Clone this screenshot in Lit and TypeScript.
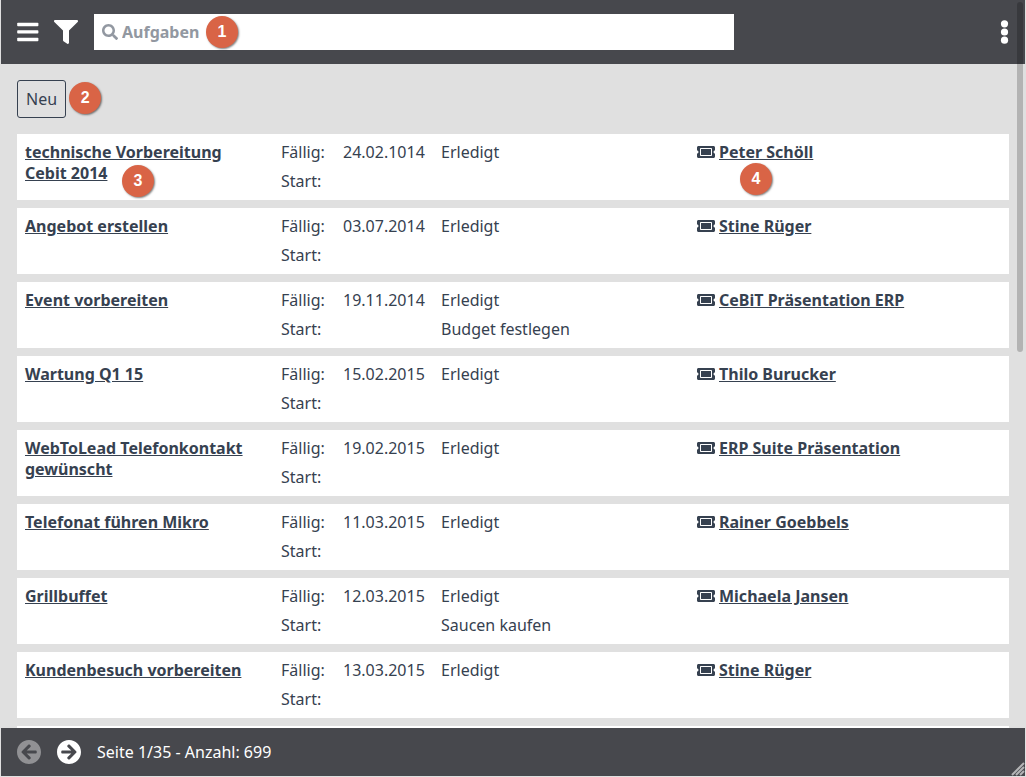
import { LitElement, html, svg, css } from "lit";
import { customElement, state } from "lit/decorators.js";

interface Task {
  title: string;
  due: string;
  status: string;
  note?: string;
  link: string;
  titleMark?: string;
  linkMark?: string;
}

const TASKS: Task[] = [
  { title: "technische Vorbereitung Cebit 2014", due: "24.02.1014", status: "Erledigt", link: "Peter Schöll", titleMark: "3", linkMark: "4" },
  { title: "Angebot erstellen", due: "03.07.2014", status: "Erledigt", link: "Stine Rüger" },
  { title: "Event vorbereiten", due: "19.11.2014", status: "Erledigt", note: "Budget festlegen", link: "CeBiT Präsentation ERP" },
  { title: "Wartung Q1 15", due: "15.02.2015", status: "Erledigt", link: "Thilo Burucker" },
  { title: "WebToLead Telefonkontakt gewünscht", due: "19.02.2015", status: "Erledigt", link: "ERP Suite Präsentation" },
  { title: "Telefonat führen Mikro", due: "11.03.2015", status: "Erledigt", link: "Rainer Goebbels" },
  { title: "Grillbuffet", due: "12.03.2015", status: "Erledigt", note: "Saucen kaufen", link: "Michaela Jansen" },
  { title: "Kundenbesuch vorbereiten", due: "13.03.2015", status: "Erledigt", link: "Stine Rüger" },
];

const arrow = svg`<path d="M256 504C119 504 8 393 8 256S119 8 256 8s248 111 248 248-111 248-248 248zm28.9-143.6L209.4 288H392c13.3 0 24-10.7 24-24v-16c0-13.3-10.7-24-24-24H209.4l75.5-72.4c9.7-9.3 9.9-24.8.4-34.3l-11-10.9c-9.4-9.4-24.6-9.4-33.9 0L107.7 239c-9.4 9.4-9.4 24.6 0 33.9l132.7 132.7c9.4 9.4 24.6 9.4 33.9 0l11-10.9c9.5-9.5 9.3-25-.4-34.3z"/>`;

@customElement("task-card")
export class TaskCard extends LitElement {
  static properties = { task: { attribute: false } };
  declare task: Task;

  static styles = css`
    :host {
      display: grid;
      grid-template-columns: minmax(0, 8fr) minmax(0, 5fr) minmax(0, 8fr) minmax(0, 10fr);
      background: #fff;
      padding: 4px 0;
      line-height: 29px;
    }
    .cell {
      padding: 0 8px;
    }
    .title {
      position: relative;
      padding: 4px 8px 0;
      line-height: 21px;
    }
    .dates {
      display: grid;
      grid-template-columns: 62px 1fr;
      grid-auto-rows: 29px;
      margin: 0;
      white-space: nowrap;
    }
    dd {
      margin: 0;
    }
    a {
      color: inherit;
      font-weight: 700;
    }
    .related {
      position: relative;
      display: flex;
      align-items: center;
      align-self: start;
      gap: 4px;
    }
    .icon {
      width: 18px;
      height: 16px;
      margin-bottom: 2px;
      fill: currentColor;
    }
    .title-mark,
    .link-mark {
      position: absolute;
    }
    .title-mark {
      left: 105px;
      top: 27px;
    }
    .link-mark {
      left: 51px;
      top: 25px;
    }
  `;

  render() {
    const t = this.task;
    return html`
      <div class="title">
        <a href="#">${t.title}</a>
        ${t.titleMark ? html`<step-mark class="title-mark">${t.titleMark}</step-mark>` : ""}
      </div>
      <dl class="cell dates">
        <dt>Fällig:</dt>
        <dd>${t.due}</dd>
        <dt>Start:</dt>
        <dd></dd>
      </dl>
      <div class="cell">
        <div>${t.status}</div>
        <div>${t.note ?? ""}</div>
      </div>
      <div class="cell related">
        <svg class="icon" viewBox="0 0 576 512" aria-hidden="true">
          <path d="M128 160h320v192H128V160zm400 96c0 26.51 21.49 48 48 48v96c0 26.51-21.49 48-48 48H48c-26.51 0-48-21.49-48-48v-96c26.51 0 48-21.49 48-48s-21.49-48-48-48v-96c0-26.51 21.49-48 48-48h480c26.51 0 48 21.49 48 48v96c-26.51 0-48 21.49-48 48zm-48-104c0-13.255-10.745-24-24-24H120c-13.255 0-24 10.745-24 24v208c0 13.255 10.745 24 24 24h336c13.255 0 24-10.745 24-24V152z" />
        </svg>
        <a href="#">${t.link}</a>
        ${t.linkMark ? html`<step-mark class="link-mark">${t.linkMark}</step-mark>` : ""}
      </div>
    `;
  }
}

@customElement("step-mark")
export class StepMark extends LitElement {
  static styles = css`
    :host {
      display: flex;
      align-items: center;
      justify-content: center;
      width: 32px;
      height: 32px;
      border-radius: 50%;
      background: #d96446;
      box-shadow: 1px 1px 2px rgba(0, 0, 0, 0.5);
      color: #fff;
      font: 700 16px/32px "Liberation Sans", Arial, sans-serif;
    }
  `;
  render() {
    return html`<slot></slot>`;
  }
}

@customElement("app-root")
export class AppRoot extends LitElement {
  @state() private page = 1;

  static styles = css`
    :host {
      position: relative;
      display: flex;
      flex-direction: column;
      box-sizing: border-box;
      height: 100vh;
      padding: 0 1px 1px;
      overflow: hidden;
      background: #e0e0e0;
      color: #364150;
      font: 16px/29px "Noto Sans", "Open Sans", sans-serif;
    }
    button {
      padding: 0;
      border: 0;
      background: none;
      color: inherit;
      font: inherit;
      cursor: pointer;
    }
    .icon {
      display: block;
      width: 24px;
      height: 24px;
      fill: currentColor;
    }
    .header {
      display: flex;
      align-items: center;
      flex: none;
      height: 64px;
      padding: 0 9px 0 15px;
      background: #47484d;
      color: #fff;
    }
    .filter {
      margin: 0 16px 0 14px;
    }
    .search {
      position: relative;
      display: flex;
      align-items: center;
      gap: 4px;
      box-sizing: border-box;
      flex: 0 1 640px;
      height: 36px;
      padding: 0 8px;
      background: #fff;
      color: #9298a1;
    }
    .search-icon {
      flex: none;
      width: 16px;
      height: 16px;
      fill: currentColor;
    }
    .search-input {
      flex: 1;
      min-width: 0;
      padding: 0;
      border: 0;
      outline: 0;
      background: none;
      color: #364150;
      font: inherit;
      font-weight: 700;
    }
    .search-input::placeholder {
      color: #9298a1;
      opacity: 1;
    }
    .search-mark {
      position: absolute;
      left: 112px;
      top: 2px;
    }
    .more {
      margin-left: auto;
    }
    .main {
      flex: 1;
      min-height: 0;
      overflow: hidden;
      padding: 16px 16px 0;
    }
    .toolbar {
      display: flex;
      align-items: flex-start;
      gap: 3px;
      margin-bottom: 16px;
    }
    .new {
      box-sizing: border-box;
      height: 38px;
      padding: 0 8px;
      border: 1px solid #364150;
      border-radius: 3px;
    }
    .new-mark {
      margin-top: 2px;
    }
    .list {
      display: grid;
      gap: 8px;
      margin: 0;
      padding: 0;
      list-style: none;
    }
    .placeholder {
      height: 66px;
      background: #fff;
    }
    .footer {
      display: flex;
      align-items: center;
      gap: 16px;
      flex: none;
      height: 48px;
      padding: 0 16px;
      background: #47484d;
      color: #fff;
    }
    .nav:disabled {
      opacity: 0.4;
    }
    .flip {
      transform: scaleX(-1);
    }
    .scrollbar {
      position: absolute;
      top: 2px;
      right: 3px;
      width: 6px;
      height: 45%;
      border-radius: 3px;
      background: rgba(0, 0, 0, 0.2);
    }
    .grip {
      position: absolute;
      right: 1px;
      bottom: 1px;
      width: 14px;
      height: 14px;
      fill: none;
      stroke: #b4b4b6;
      stroke-width: 2px;
    }
  `;

  render() {
    return html`
      <header class="header">
        <button aria-label="Menü">
          <svg class="icon" viewBox="0 0 24 24">
            <rect x="1.2" y="2.8" width="21.2" height="3.4" rx="0.8" />
            <rect x="1.2" y="10.2" width="21.2" height="3.4" rx="0.8" />
            <rect x="1.2" y="17.8" width="21.2" height="3.4" rx="0.8" />
          </svg>
        </button>
        <button class="filter" aria-label="Filter">
          <svg class="icon" viewBox="0 0 512 512">
            <path d="M487.976 0H24.028C2.71 0-8.047 25.866 7.058 40.971L192 225.941V432c0 7.831 3.821 15.17 10.237 19.662l80 55.98C298.02 518.69 320 507.493 320 487.98V225.941l184.947-184.97C520.021 25.896 509.338 0 487.976 0z" />
          </svg>
        </button>
        <label class="search">
          <svg class="search-icon" viewBox="0 0 512 512" aria-hidden="true">
            <path d="M505 442.7L405.3 343c-4.5-4.5-10.6-7-17-7H372c27.6-35.3 44-79.7 44-128C416 93.1 322.9 0 208 0S0 93.1 0 208s93.1 208 208 208c48.3 0 92.7-16.4 128-44v16.3c0 6.4 2.5 12.5 7 17l99.7 99.7c9.4 9.4 24.6 9.4 33.9 0l28.3-28.3c9.4-9.4 9.4-24.6.1-34zM208 336c-70.7 0-128-57.2-128-128 0-70.7 57.2-128 128-128 70.7 0 128 57.2 128 128 0 70.7-57.2 128-128 128z" />
          </svg>
          <input class="search-input" type="text" placeholder="Aufgaben" aria-label="Aufgaben" />
          <step-mark class="search-mark">1</step-mark>
        </label>
        <button class="more" aria-label="Mehr">
          <svg class="icon" viewBox="0 0 24 24">
            <circle cx="12.5" cy="3.8" r="3.6" />
            <circle cx="12.5" cy="12" r="3.6" />
            <circle cx="12.5" cy="20.2" r="3.6" />
          </svg>
        </button>
      </header>
      <main class="main">
        <div class="toolbar">
          <button class="new">Neu</button>
          <step-mark class="new-mark">2</step-mark>
        </div>
        <ul class="list">
          ${TASKS.map((t) => html`<li><task-card .task=${t}></task-card></li>`)}
          <li class="placeholder"></li>
        </ul>
      </main>
      <footer class="footer">
        <button class="nav" aria-label="Zurück" ?disabled=${this.page === 1} @click=${() => this.page--}>
          <svg class="icon" viewBox="8 8 496 496">${arrow}</svg>
        </button>
        <button class="nav" aria-label="Weiter" ?disabled=${this.page === 35} @click=${() => this.page++}>
          <svg class="icon flip" viewBox="8 8 496 496">${arrow}</svg>
        </button>
        <span>Seite ${this.page}/35 - Anzahl: 699</span>
      </footer>
      <div class="scrollbar"></div>
      <svg class="grip" viewBox="0 0 14 14" aria-hidden="true">
        <path d="M1 13L13 1M5 13L13 5M9 13L13 9" />
      </svg>
    `;
  }
}
